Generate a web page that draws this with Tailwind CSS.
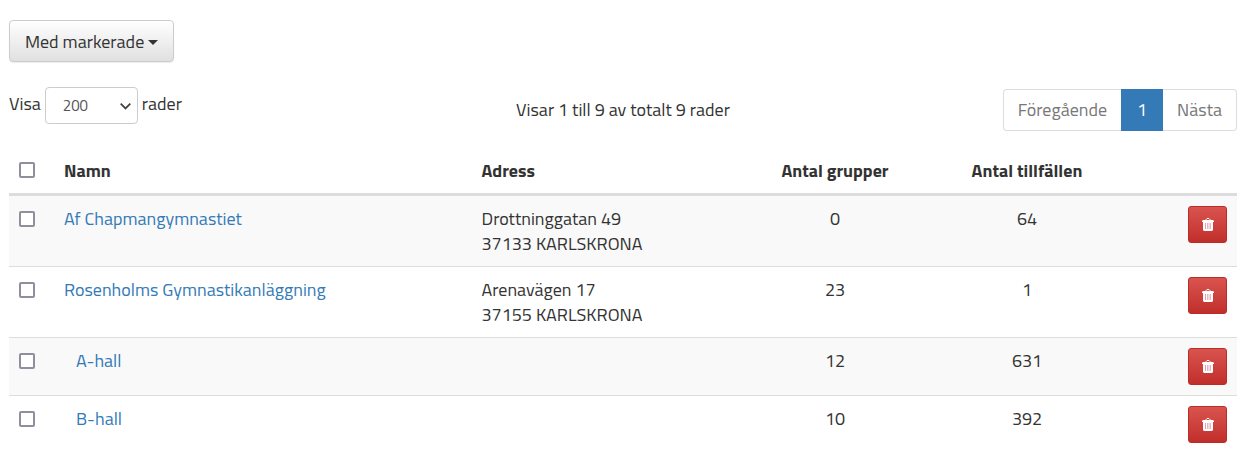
<!DOCTYPE html>
<html lang="sv">
<head>
    <meta charset="UTF-8">
    <meta name="viewport" content="width=device-width, initial-scale=1.0">
    <title>Lokaler</title>
    <script src="https://cdn.jsdelivr.net/npm/@tailwindcss/browser@4"></script>
</head>
<body class="bg-white pt-5 pl-[9px] pr-[3px] font-['Titillium_Web',Roboto,sans-serif] text-[18px] leading-[25px] text-[#333]">
    <!-- Icon shared by the delete buttons -->
    <svg class="hidden" aria-hidden="true">
        <symbol id="trash" viewBox="0 0 12 13">
            <path fill="none" stroke="currentColor" d="M4 2V1.500l1-1h2l1 1V2"/>
            <path fill="currentColor" d="M1 2h10l1 1v1h-1v8l-1 1H2l-1-1V4H0V3z"/>
            <path fill="#e3a0b4" d="M3 5h1v6H3zM5 5h.8v6H5zM6.600 5h.8v6h-.8zM8.200 5H9v6h-.8z"/>
        </symbol>
    </svg>

    <button type="button" class="flex h-[42px] items-center gap-1 rounded border border-[#ccc] bg-linear-to-b from-white to-[#e0e0e0] px-[15px] shadow-[0_1px_1px_rgba(0,0,0,0.08)]">
        Med markerade
        <svg class="mt-[2px] h-[5px] w-[10px]" viewBox="0 0 10 5" aria-hidden="true"><path fill="#333" d="M0 0h10L5 5z"/></svg>
    </button>

    <!-- Toolbar -->
    <div class="mt-[25px] grid grid-cols-3 items-start">
        <div class="flex items-start gap-1">
            <label for="rows" class="pt-1">Visa</label>
            <div class="relative">
                <select id="rows" class="h-[37px] w-[93px] appearance-none rounded border border-[#ccc] bg-white pl-[17px] text-[15px] text-[#555]">
                    <option>200</option>
                </select>
                <svg class="pointer-events-none absolute top-4 right-[7px] h-[7px] w-[11px]" viewBox="0 0 11 7" aria-hidden="true"><path d="M.7.700l4.800 4.800L10.300.7" fill="none" stroke="#444" stroke-width="1.800"/></svg>
            </div>
            <span class="pt-1">rader</span>
        </div>
        <p class="pt-[10px] text-center">Visar 1 till 9 av totalt 9 rader</p>
        <nav class="mt-[2px] flex h-[42px] justify-self-end leading-10 text-[#777]">
            <a href="#" class="rounded-l border border-r-0 border-[#ddd] px-[14px]">Föregående</a>
            <a href="#" class="w-[42px] border border-[#337ab7] bg-[#337ab7] text-center text-white">1</a>
            <a href="#" class="rounded-r border border-l-0 border-[#ddd] px-[14px]">Nästa</a>
        </nav>
    </div>

    <table class="mt-[17px] w-full table-fixed border-separate border-spacing-0">
        <colgroup>
            <col class="w-[45px]">
            <col class="w-[34%]">
            <col>
            <col class="w-48">
            <col class="w-48">
            <col class="w-[114px]">
        </colgroup>
        <thead>
            <tr class="text-left align-top *:border-b-3 *:border-[#ddd] *:p-[10px]">
                <th><input type="checkbox" aria-label="Markera alla" class="mt-1 block size-4 appearance-none rounded-xs border-2 border-[#8f8f9d] bg-white checked:bg-[#337ab7]"></th>
                <th>Namn</th>
                <th>Adress</th>
                <th class="text-center">Antal grupper</th>
                <th class="text-center">Antal tillfällen</th>
                <th></th>
            </tr>
        </thead>
        <tbody class="*:align-top *:odd:bg-[#f9f9f9]">
            <tr class="*:border-b *:border-[#ddd] *:p-[10px]">
                <td><input type="checkbox" aria-label="Af Chapmangymnastiet" class="mt-[5px] block size-4 appearance-none rounded-xs border-2 border-[#8f8f9d] bg-white checked:bg-[#337ab7]"></td>
                <td><a href="#" class="text-[#337ab7]">Af Chapmangymnastiet</a></td>
                <td>Drottninggatan 49<br>37133 KARLSKRONA</td>
                <td class="text-center">0</td>
                <td class="text-center">64</td>
                <td><button type="button" aria-label="Ta bort" class="ml-auto flex h-[37px] w-[39px] items-center justify-center rounded-[3px] border border-[#b92c28] bg-linear-to-b from-[#d9534f] to-[#c12e2a] text-white"><svg class="h-[13px] w-3"><use href="#trash"/></svg></button></td>
            </tr>
            <tr class="*:border-b *:border-[#ddd] *:p-[10px]">
                <td><input type="checkbox" aria-label="Rosenholms Gymnastikanläggning" class="mt-[5px] block size-4 appearance-none rounded-xs border-2 border-[#8f8f9d] bg-white checked:bg-[#337ab7]"></td>
                <td><a href="#" class="text-[#337ab7]">Rosenholms Gymnastikanläggning</a></td>
                <td>Arenavägen 17<br>37155 KARLSKRONA</td>
                <td class="text-center">23</td>
                <td class="text-center">1</td>
                <td><button type="button" aria-label="Ta bort" class="ml-auto flex h-[37px] w-[39px] items-center justify-center rounded-[3px] border border-[#b92c28] bg-linear-to-b from-[#d9534f] to-[#c12e2a] text-white"><svg class="h-[13px] w-3"><use href="#trash"/></svg></button></td>
            </tr>
            <tr class="*:border-b *:border-[#ddd] *:p-[10px]">
                <td><input type="checkbox" aria-label="A-hall" class="mt-[5px] block size-4 appearance-none rounded-xs border-2 border-[#8f8f9d] bg-white checked:bg-[#337ab7]"></td>
                <td><a href="#" class="ml-3 text-[#337ab7]">A-hall</a></td>
                <td></td>
                <td class="text-center">12</td>
                <td class="text-center">631</td>
                <td><button type="button" aria-label="Ta bort" class="ml-auto flex h-[37px] w-[39px] items-center justify-center rounded-[3px] border border-[#b92c28] bg-linear-to-b from-[#d9534f] to-[#c12e2a] text-white"><svg class="h-[13px] w-3"><use href="#trash"/></svg></button></td>
            </tr>
            <tr class="*:p-[10px]">
                <td><input type="checkbox" aria-label="B-hall" class="mt-[5px] block size-4 appearance-none rounded-xs border-2 border-[#8f8f9d] bg-white checked:bg-[#337ab7]"></td>
                <td><a href="#" class="ml-3 text-[#337ab7]">B-hall</a></td>
                <td></td>
                <td class="text-center">10</td>
                <td class="text-center">392</td>
                <td><button type="button" aria-label="Ta bort" class="ml-auto flex h-[37px] w-[39px] items-center justify-center rounded-[3px] border border-[#b92c28] bg-linear-to-b from-[#d9534f] to-[#c12e2a] text-white"><svg class="h-[13px] w-3"><use href="#trash"/></svg></button></td>
            </tr>
        </tbody>
    </table>
</body>
</html>
